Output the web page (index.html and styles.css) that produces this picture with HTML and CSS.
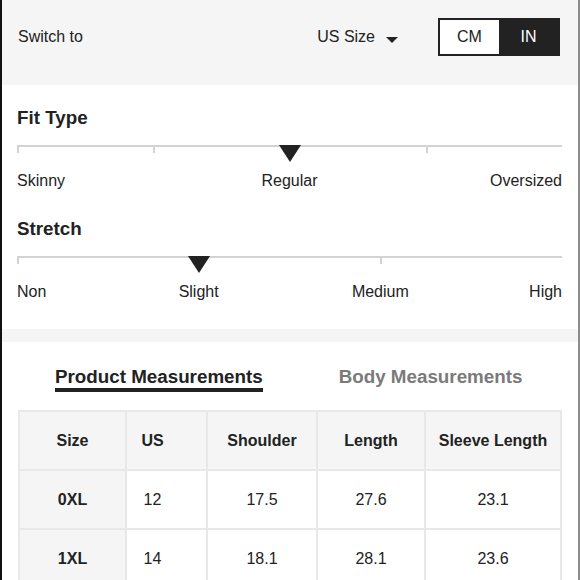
FILE: index.html
```html
<!DOCTYPE html>
<html lang="en">
<head>
<meta charset="utf-8">
<title>Size Guide</title>
<link rel="stylesheet" href="styles.css">
</head>
<body>
<div class="page">
  <div class="topbar">
    <span class="switch-label">Switch to</span>
    <div class="size-select">US Size <span class="caret"></span></div>
    <div class="unit-toggle">
      <span class="unit">CM</span>
      <span class="unit active">IN</span>
    </div>
  </div>

  <div class="attrs">
    <section class="attr">
      <h3 class="attr-title">Fit Type</h3>
      <div class="track track-fit">
        <span class="seg"></span><span class="seg"></span><span class="seg"></span>
        <span class="marker" style="left:50%"></span>
      </div>
      <div class="labels labels-fit">
        <span class="lab lab-start">Skinny</span>
        <span class="lab lab-mid1">Regular</span>
        <span class="lab lab-end">Oversized</span>
      </div>
    </section>

    <section class="attr">
      <h3 class="attr-title">Stretch</h3>
      <div class="track track-stretch">
        <span class="seg"></span><span class="seg"></span>
        <span class="marker" style="left:33.333%"></span>
      </div>
      <div class="labels labels-stretch">
        <span class="lab lab-start">Non</span>
        <span class="lab lab-s1">Slight</span>
        <span class="lab lab-s2">Medium</span>
        <span class="lab lab-end">High</span>
      </div>
    </section>
  </div>

  <div class="band"></div>

  <div class="measure">
    <div class="tabs">
      <span class="tab active">Product Measurements</span>
      <span class="tab">Body Measurements</span>
    </div>
    <table class="size-table">
      <colgroup>
        <col class="c-size"><col class="c-us"><col class="c-sh"><col class="c-len"><col class="c-sl">
      </colgroup>
      <thead>
        <tr><th>Size</th><th class="us">US</th><th>Shoulder</th><th>Length</th><th>Sleeve Length</th></tr>
      </thead>
      <tbody>
        <tr><th>0XL</th><td class="us">12</td><td>17.5</td><td>27.6</td><td>23.1</td></tr>
        <tr><th>1XL</th><td class="us">14</td><td>18.1</td><td>28.1</td><td>23.6</td></tr>
      </tbody>
    </table>
  </div>
</div>
</body>
</html>
```

FILE: styles.css
```css
html, body {
  margin: 0;
  padding: 0;
  background: #ffffff;
}

body {
  font-family: "Liberation Sans", Arial, sans-serif;
  color: #222222;
}

.page {
  width: 580px;
  height: 580px;
  box-sizing: border-box;
  border-left: 2px solid #111111;
  border-right: 2px solid #8c8c8c;
  overflow: hidden;
  background: #ffffff;
}

/* top bar */
.topbar {
  height: 85px;
  box-sizing: border-box;
  padding: 18px 18px 29px 16px;
  background: #f5f5f5;
  display: flex;
  align-items: center;
}

.switch-label {
  flex: 1;
  font-size: 16px;
}

.size-select {
  display: flex;
  align-items: center;
  gap: 11px;
  font-size: 16px;
  margin-right: 40px;
}

.caret {
  width: 0;
  height: 0;
  border-left: 6px solid transparent;
  border-right: 6px solid transparent;
  border-top: 6px solid #222222;
  margin-top: 5px;
}

.unit-toggle {
  display: flex;
  height: 38px;
  box-sizing: border-box;
  border: 2px solid #222222;
}

.unit {
  width: 59px;
  text-align: center;
  line-height: 34px;
  font-size: 16px;
  background: #ffffff;
  color: #222222;
}

.unit.active {
  background: #222222;
  color: #ffffff;
}

/* attribute scales */
.attrs {
  padding: 22px 16px 27px 15px;
}

.attr + .attr {
  margin-top: 27px;
}

.attr-title {
  margin: 0;
  font-size: 18.8px;
  line-height: 22px;
  font-weight: bold;
}

.track {
  position: relative;
  display: grid;
  margin-top: 16px;
}

.track-fit {
  grid-template-columns: 1fr 2fr 1fr;
}

.track-stretch {
  grid-template-columns: 2fr 1fr;
}

.seg {
  height: 8px;
  box-sizing: border-box;
  border-top: 2px solid #d3d3d3;
  border-left: 2px solid #d3d3d3;
}

.seg:last-of-type {
  border-right: 2px solid #d3d3d3;
}

.marker {
  position: absolute;
  top: 0;
  width: 0;
  height: 0;
  border-left: 11.5px solid transparent;
  border-right: 11.5px solid transparent;
  border-top: 17px solid #222222;
  transform: translateX(-50%);
}

.labels {
  display: grid;
  margin-top: 18px;
  font-size: 16px;
  line-height: 20px;
}

.labels-fit {
  grid-template-columns: repeat(4, 1fr);
}

.labels-stretch {
  grid-template-columns: repeat(6, 1fr);
}

.lab {
  white-space: nowrap;
}

.lab-start {
  justify-self: start;
}

.lab-end {
  justify-self: end;
}

.labels-fit .lab-end {
  grid-column: 4;
}

.lab-mid1 {
  grid-column: 2 / span 2;
  justify-self: center;
}

.lab-s1 {
  grid-column: 2 / span 2;
  justify-self: center;
}

.lab-s2 {
  grid-column: 4 / span 2;
  justify-self: center;
}

.band {
  height: 13px;
  background: #f5f5f5;
}

/* measurements */
.measure {
  padding: 24px 18px 0 16px;
}

.tabs {
  display: flex;
  gap: 76px;
  padding-left: 37px;
}

.tab {
  font-size: 18.8px;
  line-height: 22px;
  font-weight: bold;
  color: #7a7a7a;
  border-bottom: 4px solid transparent;
}

.tab.active {
  color: #222222;
  border-bottom-color: #222222;
}

.size-table {
  margin-top: 18px;
  width: 542px;
  border-collapse: collapse;
  table-layout: fixed;
}

.c-size { width: 107px; }
.c-us { width: 81px; }
.c-sh { width: 110px; }
.c-len { width: 108px; }
.c-sl { width: 136px; }

.size-table th,
.size-table td {
  height: 57px;
  padding: 0;
  border: 2px solid #e8e8e8;
  text-align: center;
  font-size: 16px;
  color: #222222;
}

.size-table th {
  font-weight: bold;
}

.size-table thead th,
.size-table tbody th {
  background: #f5f5f5;
}

.size-table .us {
  padding-right: 28px;
}
```
